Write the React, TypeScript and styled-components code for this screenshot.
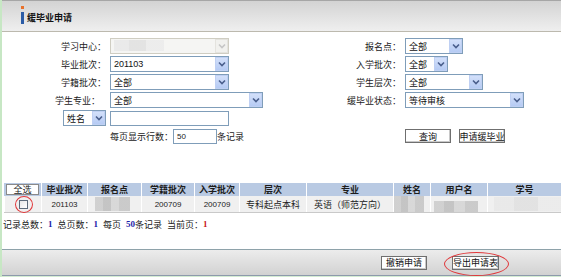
import React, { ReactElement } from 'react';
import styled, { createGlobalStyle } from 'styled-components';

const GlobalStyle = createGlobalStyle`
    html, body {
        margin: 0;
        padding: 0;
        background: #fff;
    }
    body {
        font-family: "Liberation Sans", "Noto Sans CJK SC", sans-serif;
        font-size: 9px;
        color: #222;
    }
`;

const Page = styled.div`
    width: 561px;
    height: 277px;
    box-sizing: border-box;
    border-left: 2px solid #c7e7c4;
    border-bottom: 1px solid #d4ecd2;
    display: flex;
    flex-direction: column;
    overflow: hidden;
    background: #fff;
`;

const Header = styled.div`
    height: 32px;
    box-sizing: border-box;
    border-top: 1px solid #a6a6a6;
    border-bottom: 1px solid #bcb9ae;
    background: linear-gradient(#d3d3d3, #e4e4e4 60%, #efefef);
    display: flex;
    align-items: center;
    padding: 3px 0 0 19px;
`;

const TitleMark = styled.span`
    position: relative;
    width: 3px;
    height: 12px;
    background: #2b5ca6;
    &::before {
        content: '';
        position: absolute;
        left: 0;
        top: -6px;
        width: 3px;
        height: 3px;
        background: #e8712c;
    }
`;

const Title = styled.span`
    margin-left: 3px;
    font-family: "Noto Sans CJK SC", sans-serif;
    font-weight: 700;
    font-size: 9px;
    color: #111;
`;

const Form = styled.div`
    display: grid;
    grid-template-columns: 108px 220px 75px 1fr;
    grid-auto-rows: 18px;
    padding-top: 5px;
    align-items: center;
`;

const Label = styled.span<{ $pad?: number }>`
    justify-self: end;
    padding-right: ${(p) => p.$pad ?? 4}px;
    white-space: nowrap;
    color: #222;
`;

const Cell = styled.div`
    display: flex;
    align-items: center;
`;

const Note = styled.span`
    color: #222;
`;

const ButtonCell = styled(Cell)`
    gap: 8px;
`;

const SelectBox = styled.div<{ $w: number; $disabled?: boolean }>`
    width: ${(p) => p.$w}px;
    height: 16px;
    box-sizing: border-box;
    border: 1px solid ${(p) => (p.$disabled ? '#cfcdc2' : '#7f9db9')};
    background: ${(p) => (p.$disabled ? '#f5f5f3' : '#fff')};
    display: flex;
    align-items: center;
`;

const SelectText = styled.span`
    flex: 1;
    padding-left: 3px;
    color: #111;
    white-space: nowrap;
    overflow: hidden;
`;

const Arrow = styled.span<{ $disabled?: boolean }>`
    width: 13px;
    height: 14px;
    box-sizing: border-box;
    border: 1px solid ${(p) => (p.$disabled ? '#e4e3de' : '#bfd0f3')};
    background: ${(p) =>
        p.$disabled ? '#f1f1ee' : 'linear-gradient(#d3e0fa, #b6cbf4)'};
    display: flex;
    align-items: center;
    justify-content: center;
`;

const Mosaic = styled.span<{ $w: number; $h: number; $ml?: number }>`
    display: inline-block;
    width: ${(p) => p.$w}px;
    height: ${(p) => p.$h}px;
    margin-left: ${(p) => p.$ml ?? 0}px;
    background: linear-gradient(
        90deg,
        #cbcbcb 0 22%,
        #bdbdbd 22% 45%,
        #d4d4d4 45% 70%,
        #c4c4c4 70% 100%
    );
    opacity: 0.85;
`;

const LightMosaic = styled(Mosaic)`
    background: linear-gradient(90deg, #e8e8e8 0 30%, #e0e0e0 30% 65%, #ebebeb 65%);
`;

const TextInput = styled.div<{ $w: number }>`
    width: ${(p) => p.$w}px;
    height: 15px;
    box-sizing: border-box;
    border: 1px solid #7f9db9;
    background: #fff;
    padding-left: 3px;
    display: flex;
    align-items: center;
    font-size: 8px;
`;

const Button = styled.div<{ $w: number }>`
    position: relative;
    width: ${(p) => p.$w}px;
    height: 14px;
    box-sizing: border-box;
    border: 1px solid #6f6f6f;
    box-shadow: inset -1px -1px 0 #c8c8c8;
    background: #fff;
    display: flex;
    align-items: center;
    justify-content: center;
    font-family: "Noto Sans CJK SC", sans-serif;
    font-size: 9px;
    color: #111;
    white-space: nowrap;
`;

const Ring = styled.span<{ $l: number; $t: number; $w: number; $h: number }>`
    position: absolute;
    left: ${(p) => p.$l}px;
    top: ${(p) => p.$t}px;
    width: ${(p) => p.$w}px;
    height: ${(p) => p.$h}px;
    border: 1px solid #e0373a;
    border-radius: 50%;
    pointer-events: none;
`;

const NameSelect = styled(Cell)`
    justify-self: end;
    padding-right: 4px;
`;

const Table = styled.div`
    margin: 38px 0 0 2px;
    display: grid;
    grid-template-columns: 37px 46px 54px 53px 45px 67px 87px 37px 57px 74px;
    border-bottom: 1px solid #c9c9c9;
`;

const Th = styled.div`
    height: 13px;
    background: #b9cae3;
    border-left: 1px solid #fff;
    display: flex;
    align-items: center;
    justify-content: center;
    font-family: "Noto Sans CJK SC", sans-serif;
    font-weight: 700;
    color: #1d1d1d;
    &:first-child {
        border-left: none;
    }
`;

const SelectAll = styled.div`
    width: 33px;
    height: 11px;
    box-sizing: border-box;
    border: 1px solid #8a8a8a;
    background: #fff;
    display: flex;
    align-items: center;
    justify-content: center;
    font-weight: 400;
`;

const Td = styled.div<{ $align?: string; $valign?: string; $cjk?: boolean }>`
    position: relative;
    height: 16px;
    background: #f0f0f0;
    border-left: 1px solid #fff;
    display: flex;
    align-items: ${(p) => p.$valign ?? 'center'};
    justify-content: ${(p) => p.$align ?? 'center'};
    font-size: ${(p) => (p.$cjk ? 9 : 8)}px;
    color: #222;
    white-space: nowrap;
    &:first-of-type {
        border-left: none;
    }
`;

const CheckBox = styled.span`
    width: 9px;
    height: 9px;
    box-sizing: border-box;
    border: 1px solid #5d6b7b;
    background: linear-gradient(135deg, #e6e6e6, #fff);
`;

const Status = styled.div`
    margin: 5px 0 0 1px;
    height: 12px;
    display: flex;
    align-items: center;
    color: #222;
    white-space: pre;
`;

const Count = styled.b<{ $red?: boolean }>`
    color: ${(p) => (p.$red ? '#c81818' : '#1b22a8')};
    font-family: "Liberation Serif", serif;
    font-size: 9px;
`;

const Toolbar = styled.div`
    margin-top: auto;
    height: 27px;
    box-sizing: border-box;
    border-top: 1px solid #8ea2aa;
    border-bottom: 1px solid #8d9aac;
    background: linear-gradient(#ececec, #d2d2d2);
    display: flex;
    align-items: center;
    justify-content: flex-end;
    gap: 25px;
    padding: 0 62px 0 0;
`;

const Chevron = ({ disabled }: { disabled?: boolean }): ReactElement => (
    <svg width="8" height="6" viewBox="0 0 8 6">
        <polyline
            points="1,1.5 4,4.5 7,1.5"
            fill="none"
            stroke={disabled ? '#c6c6c6' : '#4a5f8c'}
            strokeWidth="1.6"
        />
    </svg>
);

interface ISelect {
    w: number;
    value?: string;
    disabled?: boolean;
    children?: React.ReactNode;
}

const Select = ({ w, value, disabled, children }: ISelect): ReactElement => (
    <SelectBox $w={w} $disabled={disabled}>
        <SelectText>{children ?? value}</SelectText>
        <Arrow $disabled={disabled}>
            <Chevron disabled={disabled} />
        </Arrow>
    </SelectBox>
);

const headers = ['毕业批次', '报名点', '学籍批次', '入学批次', '层次', '专业', '姓名', '用户名', '学号'];

const App = (): ReactElement => {
    return (
        <>
            <GlobalStyle />
            <Page>
                <Header>
                    <TitleMark />
                    <Title>缓毕业申请</Title>
                </Header>
                <Form>
                    <Label>学习中心：</Label>
                    <Cell>
                        <Select w={119} disabled>
                            <LightMosaic $w={50} $h={11} />
                        </Select>
                    </Cell>
                    <Label>报名点：</Label>
                    <Cell>
                        <Select w={58} value="全部" />
                    </Cell>

                    <Label>毕业批次：</Label>
                    <Cell>
                        <Select w={119} value="201103" />
                    </Cell>
                    <Label>入学批次：</Label>
                    <Cell>
                        <Select w={43} value="全部" />
                    </Cell>

                    <Label>学籍批次：</Label>
                    <Cell>
                        <Select w={119} value="全部" />
                    </Cell>
                    <Label>学生层次：</Label>
                    <Cell>
                        <Select w={78} value="全部" />
                    </Cell>

                    <Label $pad={10}>学生专业：</Label>
                    <Cell>
                        <Select w={153} value="全部" />
                    </Cell>
                    <Label>缓毕业状态：</Label>
                    <Cell>
                        <Select w={119} value="等待审核" />
                    </Cell>

                    <NameSelect>
                        <Select w={43} value="姓名" />
                    </NameSelect>
                    <Cell>
                        <TextInput $w={119} />
                    </Cell>
                    <span />
                    <span />

                    <span />
                    <Cell>
                        <Note>每页显示行数：</Note>
                        <TextInput $w={44}>50</TextInput>
                        <Note>条记录</Note>
                    </Cell>
                    <span />
                    <ButtonCell>
                        <Button $w={46}>查询</Button>
                        <Button $w={46}>申请缓毕业</Button>
                    </ButtonCell>
                </Form>

                <Table>
                    <Th>
                        <SelectAll>全选</SelectAll>
                    </Th>
                    {headers.map(
                        (h: string): ReactElement => (
                            <Th key={h}>{h}</Th>
                        )
                    )}
                    <Td>
                        <CheckBox />
                        <Ring $l={10} $t={0} $w={16} $h={15} />
                    </Td>
                    <Td>201103</Td>
                    <Td $align="flex-start">
                        <Mosaic $w={35} $h={14} $ml={7} />
                    </Td>
                    <Td>200709</Td>
                    <Td>200709</Td>
                    <Td $cjk>专科起点本科</Td>
                    <Td $cjk>英语（师范方向）</Td>
                    <Td $align="flex-start">
                        <Mosaic $w={30} $h={16} />
                    </Td>
                    <Td $align="flex-start" $valign="flex-end">
                        <Mosaic $w={44} $h={11} $ml={3} />
                    </Td>
                    <Td $align="flex-start">
                        <LightMosaic $w={67} $h={14} $ml={6} />
                    </Td>
                </Table>

                <Status>
                    记录总数：<Count>1</Count>  总页数：<Count>1</Count>  每页  <Count>50</Count>条记录  当前页：
                    <Count $red>1</Count>
                </Status>

                <Toolbar>
                    <Button $w={46}>撤销申请</Button>
                    <Button $w={47}>
                        导出申请表
                        <Ring $l={-9} $t={-5} $w={63} $h={22} />
                    </Button>
                </Toolbar>
            </Page>
        </>
    );
};

export default App;
